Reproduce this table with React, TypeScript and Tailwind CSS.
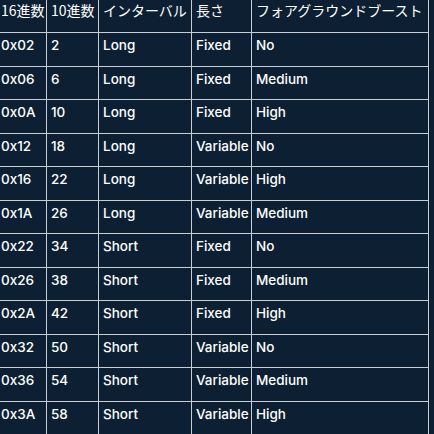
import React from "react";

const headers = ["16進数", "10進数", "インターバル", "長さ", "フォアグラウンドブースト"];

const rows: string[][] = [
  ["0x02", "2", "Long", "Fixed", "No"],
  ["0x06", "6", "Long", "Fixed", "Medium"],
  ["0x0A", "10", "Long", "Fixed", "High"],
  ["0x12", "18", "Long", "Variable", "No"],
  ["0x16", "22", "Long", "Variable", "High"],
  ["0x1A", "26", "Long", "Variable", "Medium"],
  ["0x22", "34", "Short", "Fixed", "No"],
  ["0x26", "38", "Short", "Fixed", "Medium"],
  ["0x2A", "42", "Short", "Fixed", "High"],
  ["0x32", "50", "Short", "Variable", "No"],
  ["0x36", "54", "Short", "Variable", "Medium"],
  ["0x3A", "58", "Short", "Variable", "High"],
];

const pad = ["pl-[1px]", "pl-[4px]", "pl-[4px]", "pl-[4px]", "pl-[4px]"];

export default function App() {
  return (
    <div className="w-[434px] h-[434px] overflow-hidden bg-[#0c1f33]">
      <div
        className="grid w-[429px] grid-cols-[46px_51px_92px_59px_176px] grid-rows-[32px_repeat(12,32.5px)] gap-px border-r border-[#c9ced4] bg-[#c9ced4]"
      >
        {headers.map((h, i) => (
          <div
            key={h}
            className={`bg-[#0c1f33] text-white text-[14px] leading-[20px] whitespace-nowrap overflow-hidden ${pad[i]}`}
            style={{ fontFamily: '"Noto Sans CJK JP", "Noto Sans", sans-serif' }}
          >
            {h}
          </div>
        ))}
        {rows.map((r, ri) =>
          r.map((c, ci) => (
            <div
              key={`${ri}-${ci}`}
              className={`bg-[#0c1f33] text-white text-[13.5px] leading-[20px] pt-[2px] font-medium whitespace-nowrap ${pad[ci]}`}
              style={{ fontFamily: 'Inter, "Noto Sans", sans-serif' }}
            >
              {c}
            </div>
          ))
        )}
      </div>
    </div>
  );
}
